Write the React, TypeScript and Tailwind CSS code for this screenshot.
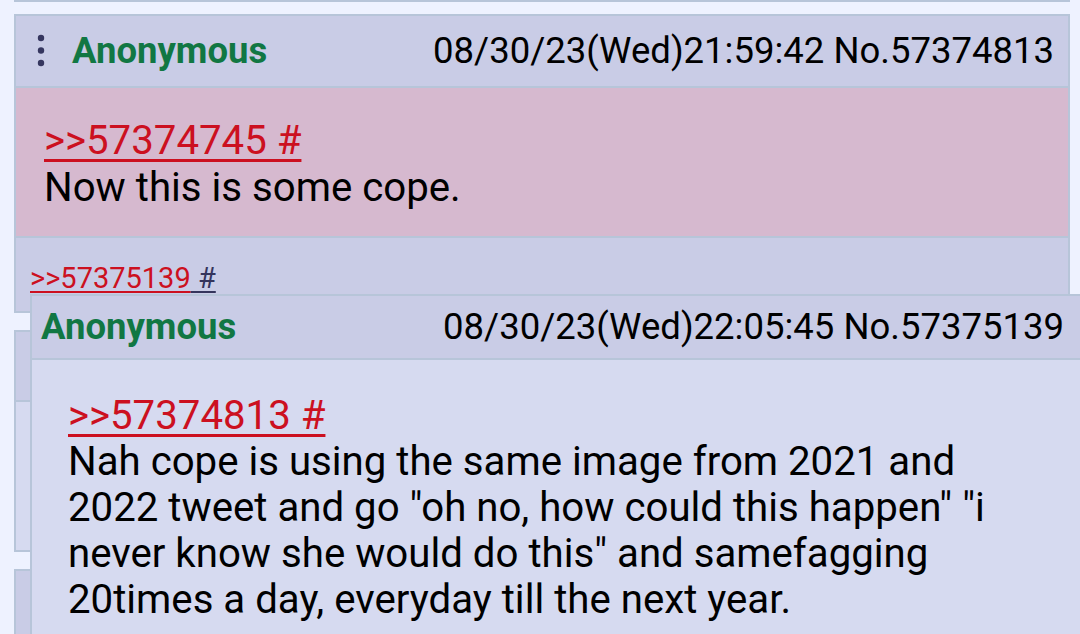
import { ReactNode } from 'react';

function DotsIcon() {
  return (
    <svg width="10" height="36" viewBox="0 0 10 36" className="shrink-0">
      <circle cx="5" cy="5" r="3.2" fill="#35365f" />
      <circle cx="5" cy="17.5" r="3.2" fill="#35365f" />
      <circle cx="5" cy="30" r="3.2" fill="#35365f" />
    </svg>
  );
}

function QuoteLink({ children }: { children: ReactNode }) {
  return (
    <a className="text-[#cc1020] underline decoration-[3px] underline-offset-[5px]">{children}</a>
  );
}

export default function App() {
  return (
    <div className="relative h-[634px] w-[1080px] overflow-hidden bg-[#eef2ff] font-[Roboto,sans-serif] text-black">
      {/* previous post, only its bottom edge is visible */}
      <div className="ml-[14px] h-[2px] w-[1056px] bg-[#b7c5d9]" />

      <div className="flex flex-col gap-[17px] pt-[12px]">
        {/* Post 1 */}
        <div className="ml-[14px] w-[1056px] border-2 border-[#b7c5d9] bg-[#c9cce6]">
          <div className="flex h-[72px] items-center border-b-2 border-[#b7c5d9] pl-[20px] pr-[14px]">
            <DotsIcon />
            <span className="ml-[26px] text-[36.5px] font-bold text-[#117743]">Anonymous</span>
            <span className="ml-auto text-[36.5px]">08/30/23(Wed)21:59:42 No.57374813</span>
          </div>
          <div className="border-b-2 border-[#b7c5d9] bg-[#d6b9cf] pb-[25px] pl-[28px] pt-[29px] text-[40.2px] leading-[47px]">
            <div><QuoteLink>&gt;&gt;57374745 #</QuoteLink></div>
            <div>Now this is some cope.</div>
          </div>
          <div className="h-[73px] pl-[14px] pt-[19px] text-[29px]">
            <a className="text-[#cc1020] underline decoration-2 underline-offset-[3px]">&gt;&gt;57375139</a>
            <a className="text-[#34345c] underline decoration-2 underline-offset-[3px]"> #</a>
          </div>
        </div>

        {/* Post 2 (mostly covered) */}
        <div className="ml-[14px] w-[1056px] border-2 border-[#b7c5d9] bg-[#d6daf0]">
          <div className="h-[70px] border-b-2 border-[#b7c5d9] bg-[#c9cce6]" />
          <div className="h-[148px]" />
        </div>

        {/* Post 3 (mostly covered) */}
        <div className="ml-[14px] w-[1056px] border-2 border-[#b7c5d9] bg-[#d6daf0]">
          <div className="h-[70px] bg-[#c9cce6]" />
        </div>
      </div>

      {/* Quote preview popup */}
      <div className="absolute left-[30px] top-[294px] w-[1056px] border-2 border-[#b7c5d9] bg-[#d6daf0]">
        <div className="flex h-[64px] items-center border-b-2 border-[#b7c5d9] bg-[#c9cce6] pl-[9px] pr-[20px]">
          <span className="text-[36.5px] font-bold text-[#117743]">Anonymous</span>
          <span className="ml-auto text-[36.5px]">08/30/23(Wed)22:05:45 No.57375139</span>
        </div>
        <div className="pl-[36px] pr-[20px] pt-[33px] pb-[30px] text-[40.2px] leading-[46px]">
          <div><QuoteLink>&gt;&gt;57374813 #</QuoteLink></div>
          <div>
            Nah cope is using the same image from 2021 and<br />
            2022 tweet and go "oh no, how could this happen" "i<br />
            never know she would do this" and samefagging<br />
            20times a day, everyday till the next year.
          </div>
        </div>
      </div>
    </div>
  );
}
